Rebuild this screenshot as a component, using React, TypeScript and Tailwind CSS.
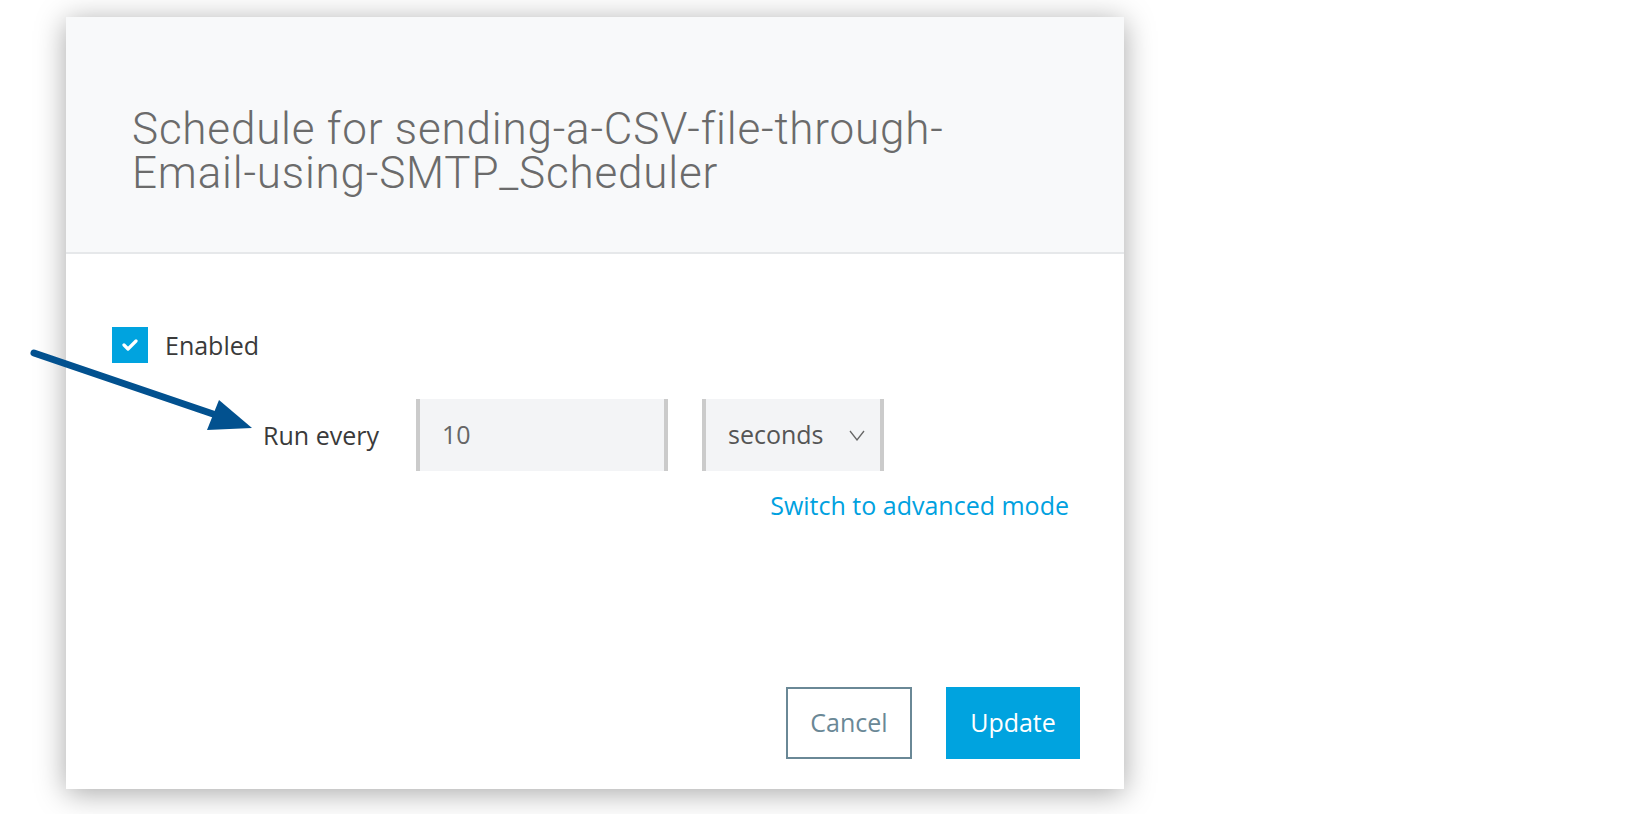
import { useState } from 'react'

const body = { fontFamily: '"Open Sans", "Liberation Sans", sans-serif' }
const title = { fontFamily: 'Roboto, "Liberation Sans", sans-serif' }

function Arrow() {
  return (
    <svg
      className="pointer-events-none absolute left-0 top-0"
      width="300"
      height="460"
      viewBox="0 0 300 460"
    >
      <line x1="34" y1="353" x2="216" y2="415" stroke="#02518f" strokeWidth="7" strokeLinecap="round" />
      <polygon points="252,428 219,400 207,430" fill="#02518f" />
    </svg>
  )
}

export default function App() {
  const [enabled, setEnabled] = useState(true)

  return (
    <div className="relative min-h-[814px] w-full bg-white" style={body}>
      <div className="pl-[66px] pt-[17px]">
        <div className="flex h-[772px] w-[1058px] flex-col bg-white shadow-[0_4px_28px_rgba(0,0,0,0.35)]">
          {/* Header */}
          <div className="border-b-2 border-[#e6e8ea] bg-[#f8f9fa] pl-[66px] pr-[60px] pb-[57px] pt-[90px]">
            <h2 className="text-[44px] font-light leading-[44px] tracking-[0.8px] text-[#6b6b6b]" style={title}>
              Schedule for sending-a-CSV-file-through-
              <br />
              Email-using-SMTP_Scheduler
            </h2>
          </div>

          {/* Body */}
          <div className="flex flex-1 flex-col pl-[46px] pr-[44px] pb-[30px] pt-[73px]">
            <label className="flex items-center gap-[17px]">
              <button
                onClick={() => setEnabled(!enabled)}
                className="flex h-[36px] w-[36px] items-center justify-center bg-[#00a3df]"
              >
                {enabled && (
                  <svg width="16" height="12" viewBox="0 0 16 12">
                    <polyline points="2,6 6,10 14,2" fill="none" stroke="white" strokeWidth="3.2" strokeLinecap="round" strokeLinejoin="round" />
                  </svg>
                )}
              </button>
              <span className="text-[25px] leading-[33px] text-[#3a3a3a]">Enabled</span>
            </label>

            <div className="mt-[36px] flex items-center">
              <span className="w-[267px] text-right text-[25px] leading-[33px] text-[#3a3a3a]">Run every</span>
              <div className="ml-[37px] flex h-[72px] w-[252px] items-center border-x-4 border-[#cbcbcb] bg-[#f3f4f6] pl-[22px] text-[25px] text-[#666]">
                10
              </div>
              <div className="ml-[34px] flex h-[72px] w-[182px] items-center justify-between border-x-4 border-[#cbcbcb] bg-[#f3f4f6] pl-[22px] pr-[15px] text-[25px] text-[#555]">
                <span>seconds</span>
                <svg width="16" height="11" viewBox="0 0 16 11">
                  <polyline points="1,1 8,10 15,1" fill="none" stroke="#666" strokeWidth="1.3" />
                </svg>
              </div>
            </div>

            <div className="mt-[18px] flex justify-end pr-[11px]">
              <a className="text-[25px] leading-[33px] text-[#00a1df]" href="#">
                Switch to advanced mode
              </a>
            </div>

            <div className="mt-auto flex justify-end gap-[34px]">
              <button className="h-[72px] w-[126px] border-2 border-[#6a8896] text-[25px] text-[#6a8896]">Cancel</button>
              <button className="h-[72px] w-[134px] bg-[#00a3df] text-[25px] text-white">Update</button>
            </div>
          </div>
        </div>
      </div>
      <Arrow />
    </div>
  )
}
